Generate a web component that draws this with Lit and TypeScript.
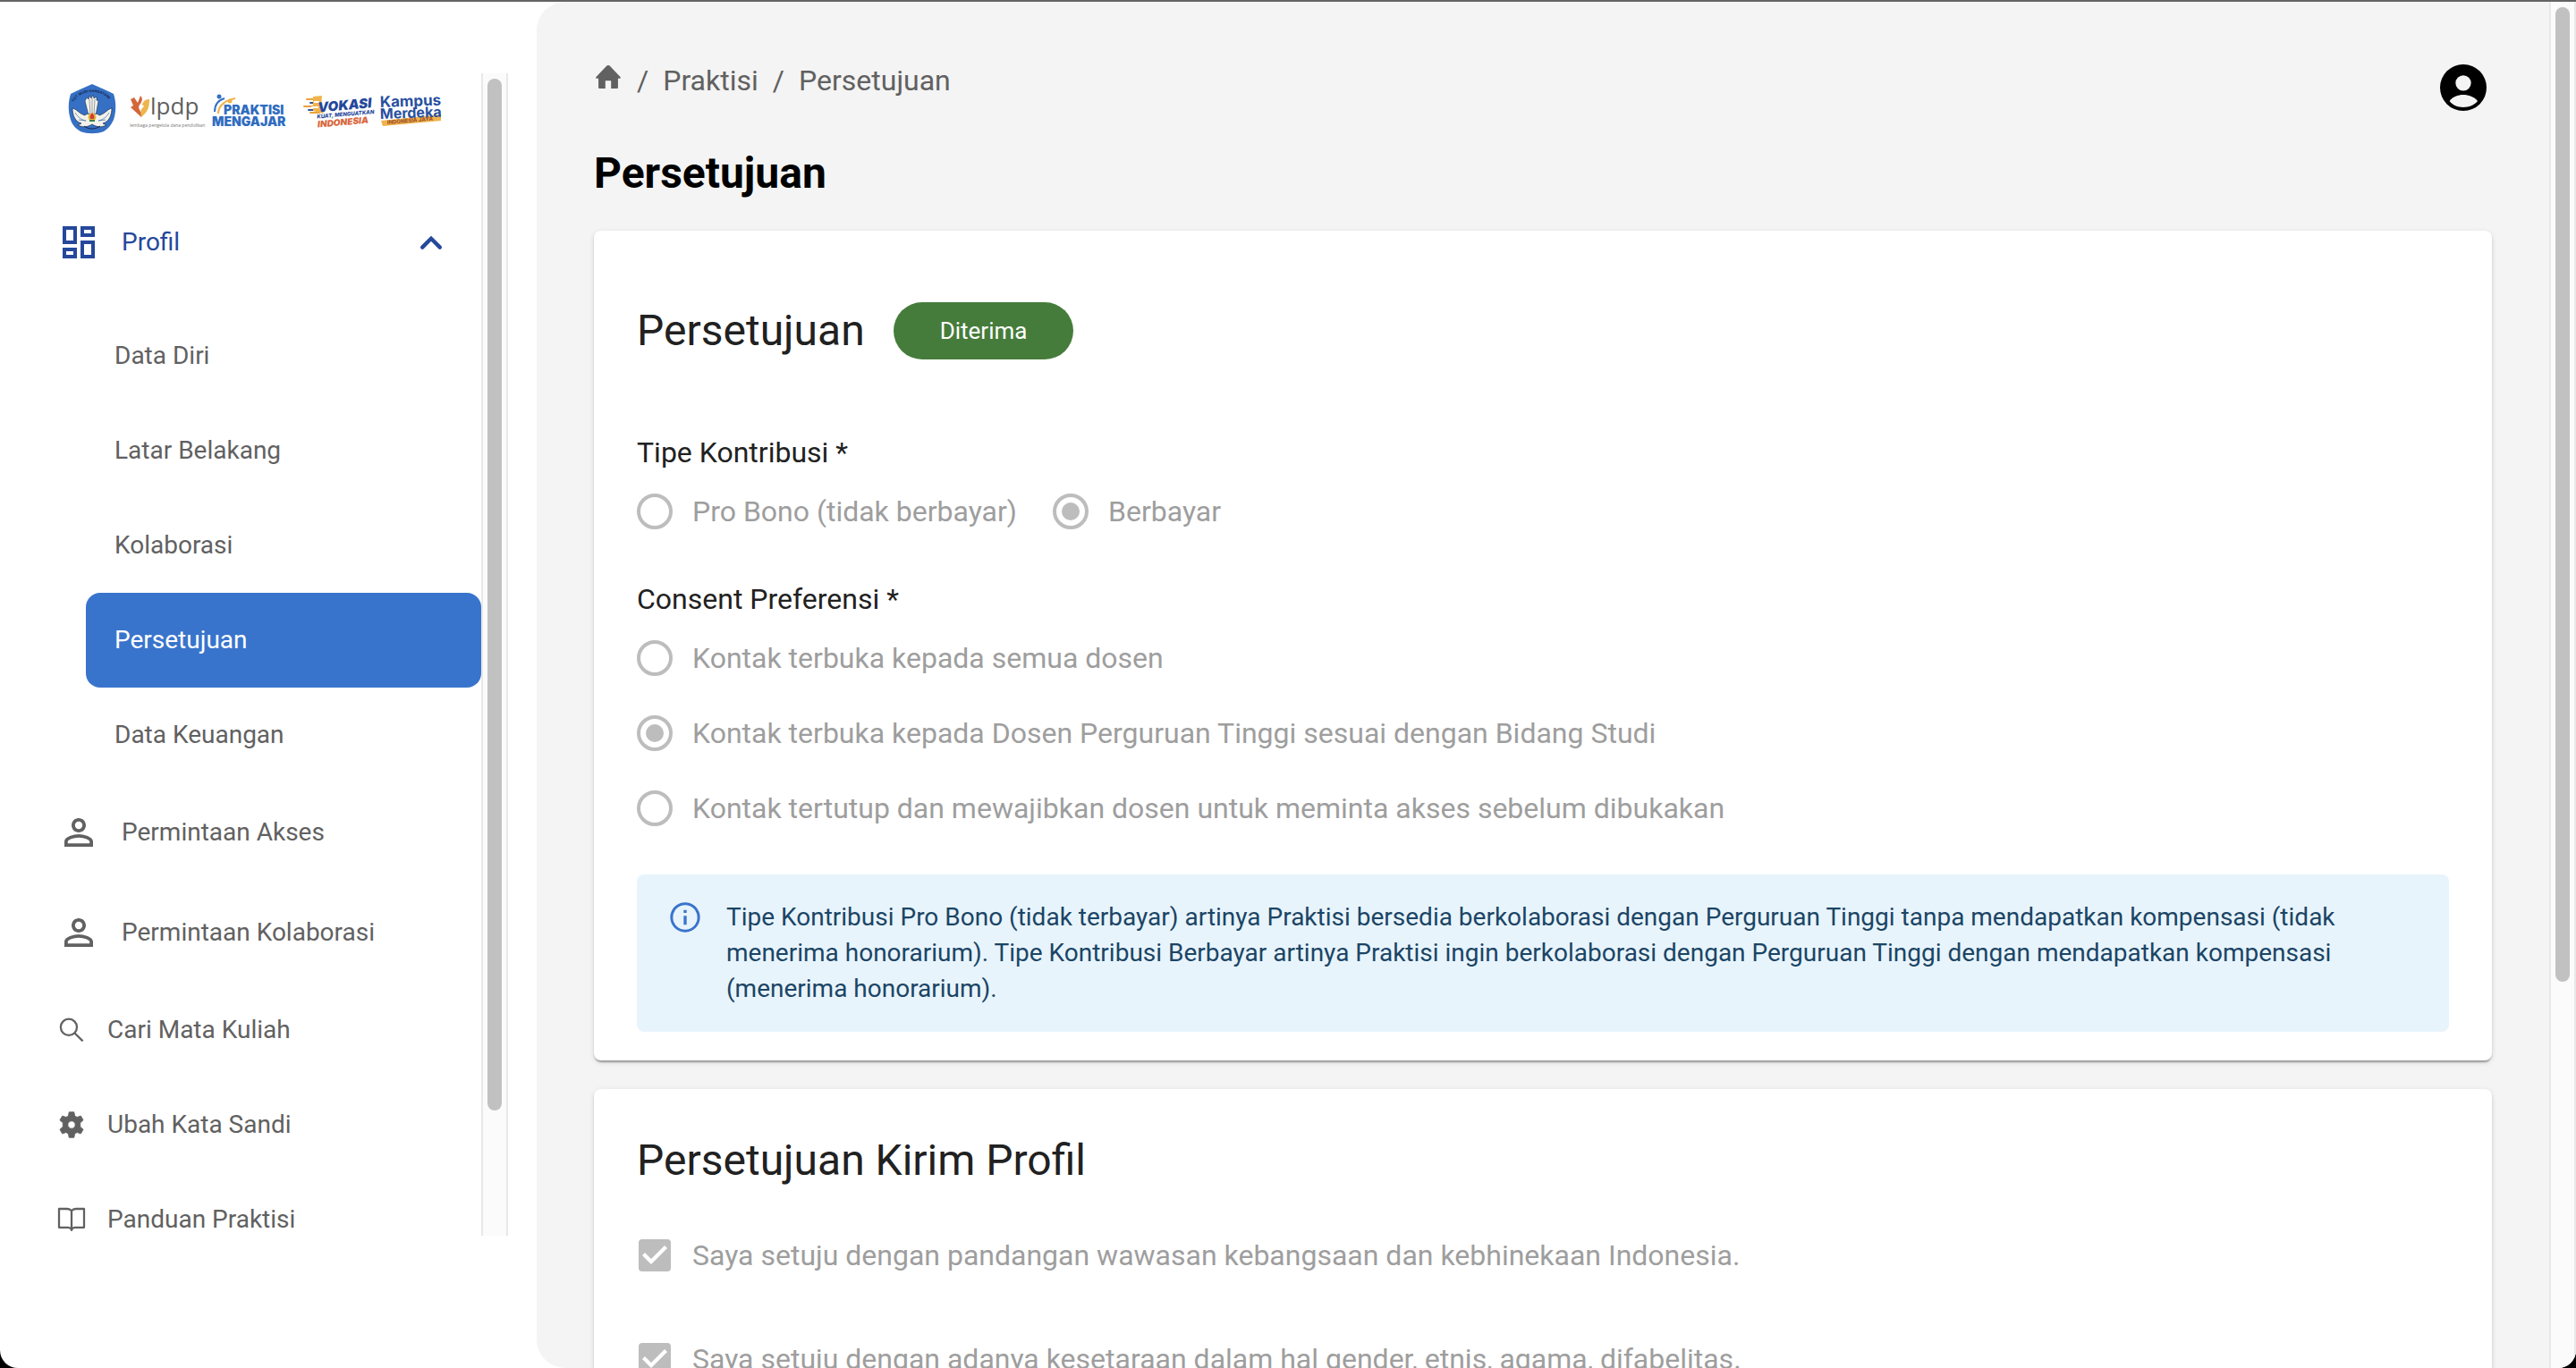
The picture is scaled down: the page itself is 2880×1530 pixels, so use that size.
import { LitElement, html, css, svg, nothing } from "lit";
import { customElement, property } from "lit/decorators.js";
import { classMap } from "lit/directives/class-map.js";

type IconName =
  | "dashboard"
  | "person"
  | "search"
  | "gear"
  | "book"
  | "chevron"
  | "home"
  | "info"
  | "account";

const icons: Record<IconName, ReturnType<typeof svg>> = {
  dashboard: svg`<path fill="currentColor" d="M19 5v2h-4V5h4M9 5v6H5V5h4m10 8v6h-4v-6h4M9 17v2H5v-2h4M21 3h-8v6h8V3zM11 3H3v10h8V3zm10 8h-8v10h8V11zm-10 4H3v6h8v-6z"/>`,
  person: svg`<path fill="currentColor" d="M12 5.9a2.1 2.1 0 1 1 0 4.2 2.1 2.1 0 0 1 0-4.2m0 9c2.97 0 6.1 1.46 6.1 2.1v1.1H5.9V17c0-.64 3.13-2.1 6.1-2.1M12 4C9.79 4 8 5.79 8 8s1.79 4 4 4 4-1.79 4-4-1.79-4-4-4zm0 9c-2.67 0-8 1.34-8 4v3h16v-3c0-2.66-5.33-4-8-4z"/>`,
  search: svg`<g fill="none" stroke="currentColor" stroke-width="1.7"><circle cx="9.7" cy="9.600" r="6.800"/><path d="M14.500 14.400l6.900 6.900"/></g>`,
  gear: svg`<path fill="currentColor" d="M9.900 1.300h4.200l.6 3.200 1.900 1.100 3.100-1.100 2.100 3.600-2.500 2.200v3.400l2.500 2.200-2.100 3.600-3.100-1.100-1.900 1.100-.6 3.200H9.900l-.6-3.200-1.900-1.100-3.100 1.100-2.100-3.600 2.500-2.200v-3.400L2.200 8.100l2.100-3.600 3.100 1.100 1.900-1.100zM12 8.900a3.100 3.100 0 1 0 0 6.200 3.100 3.100 0 0 0 0-6.200z" stroke="currentColor" stroke-width=".6" stroke-linejoin="round"/>`,
  book: svg`<g fill="none" stroke="currentColor" stroke-width="1.700" stroke-linejoin="round"><path d="M12 4.600C11 3.400 9.800 3 8.400 3H1.500v15.600h7.700c1.200 0 2.200.6 2.800 1.600.6-1 1.600-1.600 2.800-1.600h7.700V3h-6.900C14.200 3 13 3.400 12 4.600z"/><path d="M12 4.600v17"/></g>`,
  chevron: svg`<path fill="none" stroke="currentColor" stroke-width="2.200" stroke-linecap="round" d="M7.100 14.800 12 9.900l4.900 4.900"/>`,
  home: svg`<path fill="currentColor" d="M12 2.200c.5 0 .9.200 1.200.5l8.900 9.300c.5.6.3 1.400-.5 1.400h-1.400v7.400c0 .6-.4 1-1 1h-4.800v-6.600H9.600v6.600H4.800c-.6 0-1-.4-1-1v-7.400H2.400c-.8 0-1-.8-.5-1.400l8.900-9.300c.3-.3.7-.5 1.200-.5z"/>`,
  info: svg`<path fill="currentColor" d="M11 7h2v2h-2zm0 4h2v6h-2zm1-9C6.480 2 2 6.480 2 12s4.480 10 10 10 10-4.480 10-10S17.520 2 12 2zm0 18.200a8.200 8.200 0 1 1 0-16.400 8.200 8.200 0 0 1 0 16.400z"/>`,
  account: svg`<circle cx="12" cy="12" r="12" fill="#000"/><circle cx="12" cy="9.600" r="4" fill="#f4f4f4"/><path fill="#f4f4f4" d="M4.900 18.900C6.500 16.700 9.200 15.700 12 15.700s5.500 1 7.400 3.200C17.600 21.100 15 22.100 12 22.100s-5.500-1-7.100-3.200z"/>`,
};

@customElement("ui-icon")
class UiIcon extends LitElement {
  static styles = css`
    :host {
      display: block;
      flex: none;
    }
    .glyph {
      display: block;
      width: 100%;
      height: 100%;
    }
  `;

  @property() name: IconName = "home";

  render() {
    return html`<svg class="glyph" viewBox="0 0 24 24" aria-hidden="true">${icons[this.name]}</svg>`;
  }
}

@customElement("partner-logos")
class PartnerLogos extends LitElement {
  static styles = css`
    :host {
      display: flex;
      gap: 12px;
      font-family: Inter, sans-serif;
    }
    .logo {
      display: block;
      height: 58px;
      flex: none;
      overflow: visible;
    }
    .crest {
      width: 56px;
    }
    .wide {
      width: 82px;
    }
    .campus {
      width: 70px;
    }
  `;

  render() {
    return html`
      <svg class="logo crest" viewBox="0 0 56 58" role="img" aria-label="Tut Wuri Handayani">
        <path fill="#3570c4" d="M28 1c8 4 17 7 24 11 3 9 3 20 0 29-3 6-6 10-11 13-8 3-18 3-26 0C10 51 6 47 4 41 1 32 1 21 4 12 11 8 20 5 28 1z"/>
        <path id="arc" fill="none" d="M6 25C11 5 45 5 50 25"/>
        <text font-size="4" font-weight="700" fill="#16294f"><textPath href="#arc" startOffset="4">TUT WURI HANDAYANI</textPath></text>
        <path fill="#f3f2ea" stroke="#1d2c4c" stroke-width=".6" d="M22 16l2 2 1-4 2 3 2-4 1 4 3-2v4l2 1-3 16h-8l-4-16z"/>
        <path stroke="#5a6478" stroke-width=".6" fill="none" d="M25 18l1 18M28 17v19M31 18l-1 18"/>
        <path fill="#f3f2ea" stroke="#1d2c4c" stroke-width=".7" d="M6 28c5 1 7 6 14 8 2-2 4-2 8-1 4-1 6-1 8 1 7-2 9-7 14-8 0 8-3 15-10 17l4 2c-6 3-11 2-16-1-5 3-10 4-16 1l4-2C9 43 6 36 6 28z"/>
        <path stroke="#3d6cae" stroke-width=".7" fill="none" d="M9 33c3 5 7 8 12 9M47 33c-3 5-7 8-12 9M13 41l8 1M43 41l-8 1"/>
        <circle cx="28" cy="38" r="4.500" fill="#e5b63c"/>
        <path fill="#cf3f2e" d="M28 33c2 3 3 4 2 7h-4c-1-3 0-4 2-7z"/>
        <path fill="#3c8244" d="M25 41h6v2h-6z"/>
        <path stroke="#16294f" stroke-width="1" fill="none" d="M19 48c5 4 13 4 18 0"/>
      </svg>
      <svg class="logo wide" viewBox="0 0 82 58" role="img" aria-label="lpdp">
        <path fill="#d4673a" d="M3 18l4-2 4 6v6l4 5v5L3 27l3-2z"/>
        <path fill="#d4673a" d="M14 14c3 3 2 6 0 9-3 3-2 6 1 9-4-2-6-6-4-10z"/>
        <path fill="#eeb54c" d="M24 18c0 10-2 14-9 20-1-6-1-9 3-12l-2-2c1-4 4-6 8-6z"/>
        <text x="25" y="35" font-family="Open Sans, sans-serif" font-size="26" fill="#5f5f5f">lpdp</text>
        <text x="2" y="49" font-family="Open Sans, sans-serif" font-size="5" fill="#777">lembaga pengelola dana pendidikan</text>
      </svg>
      <svg class="logo wide" viewBox="0 0 82 58" role="img" aria-label="Praktisi Mengajar">
        <g fill="none" stroke-width="2"><path stroke="#f0b34a" d="M7 34c0-9 8-15 19-17"/><path stroke="#3570c4" d="M3 32C3 24 7 19 14 17"/></g>
        <circle cx="8" cy="15" r="2.500" fill="#3570c4"/>
        <circle cx="20" cy="20" r="2.500" fill="#f0b34a"/>
        <text x="13" y="35" font-size="14" font-weight="900" fill="#2f6cc0">PRAKTISI</text>
        <text x="0" y="48" font-size="14" font-weight="900" fill="#2f6cc0">MENGAJAR</text>
      </svg>
      <svg class="logo wide" viewBox="0 0 82 58" role="img" aria-label="Vokasi Kuat, Menguatkan Indonesia">
        <g stroke-width="2" stroke-linecap="round"><path stroke="#e9a13c" d="M12 18h14M9 26h16M16 33h10"/><path stroke="#35559b" d="M16 22h10M14 30h12"/></g>
        <path fill="#f0b34a" d="M19 15l10-1-1 12 3 8-12-3z"/>
        <path fill="#fff" d="M20 20h6v2h-6zM17 26h8v2h-8z"/>
        <g transform="rotate(-5 30 34)" font-style="italic">
          <text x="25" y="32" font-size="15" font-weight="900" fill="#24479a">VOKASI</text>
          <text x="23" y="39" font-size="6" font-weight="800" fill="#24479a">KUAT, MENGUATKAN</text>
          <text x="23" y="49" font-size="10" font-weight="900" fill="#d9663c">INDONESIA</text>
        </g>
      </svg>
      <svg class="logo campus" viewBox="0 0 70 58" role="img" aria-label="Kampus Merdeka Indonesia Jaya">
        <path fill="#f0b34a" d="M1 42l67-7v7L3 48z"/>
        <text x="8" y="46" font-size="6" font-weight="800" fill="#a0522d" transform="rotate(-5 8 46)">INDONESIA JAYA</text>
        <text x="0" y="27" font-size="17" font-weight="700" fill="#28509f" transform="rotate(-2 0 27)">Kampus</text>
        <text x="0" y="40" font-size="16" font-weight="700" fill="#28509f" transform="rotate(-2 0 40)">Merdeka</text>
      </svg>
    `;
  }
}

@customElement("scroll-track")
class ScrollTrack extends LitElement {
  static styles = css`
    :host {
      display: block;
      flex: none;
      box-sizing: border-box;
      width: 30px;
      padding: 6px 5px;
      background: #fafbfa;
      border: solid #e7e9e8;
      border-width: 0 2px;
    }
    .thumb {
      width: 16px;
      border-radius: 8px;
      background: #c1c1c1;
    }
  `;

  @property({ type: Number }) ratio = 1;

  render() {
    return html`<div class="thumb" style="height:${this.ratio * 100}%"></div>`;
  }
}

interface NavItem {
  label: string;
  icon?: IconName;
  kind: "group" | "child" | "main" | "plain";
  active?: boolean;
}

const navItems: NavItem[] = [
  { label: "Profil", icon: "dashboard", kind: "group" },
  { label: "Data Diri", kind: "child" },
  { label: "Latar Belakang", kind: "child" },
  { label: "Kolaborasi", kind: "child" },
  { label: "Persetujuan", kind: "child", active: true },
  { label: "Data Keuangan", kind: "child" },
  { label: "Permintaan Akses", icon: "person", kind: "main" },
  { label: "Permintaan Kolaborasi", icon: "person", kind: "main" },
  { label: "Cari Mata Kuliah", icon: "search", kind: "plain" },
  { label: "Ubah Kata Sandi", icon: "gear", kind: "plain" },
  { label: "Panduan Praktisi", icon: "book", kind: "plain" },
];

@customElement("side-bar")
class SideBar extends LitElement {
  static styles = css`
    :host {
      display: flex;
      flex: none;
      box-sizing: border-box;
      width: 600px;
      padding: 80px 32px 148px 0;
      color: #616161;
      font-size: 28px;
      line-height: 40px;
    }
    .scroller {
      flex: 1;
      min-width: 0;
      overflow: auto;
      scrollbar-width: none;
    }
    .logos {
      padding: 11px 0 64px 75px;
    }
    .nav {
      display: flex;
      flex-direction: column;
    }
    .item {
      display: flex;
      align-items: center;
      flex: none;
      box-sizing: border-box;
      border: 0;
      background: none;
      color: inherit;
      font: inherit;
      text-align: left;
      text-decoration: none;
      height: 106px;
      padding: 0 32px 0 64px;
      gap: 24px;
    }
    .group,
    .main {
      height: 112px;
    }
    .group {
      color: #25489b;
      margin-bottom: 18px;
    }
    .child {
      margin-left: 96px;
      padding: 0 32px;
      border-radius: 16px;
    }
    .active {
      background: #3974cc;
      color: #fff;
    }
    .label {
      flex: 1;
    }
    .large {
      width: 48px;
      height: 48px;
    }
    .small {
      width: 32px;
      height: 32px;
    }
  `;

  private renderItem(item: NavItem) {
    const classes = classMap({ item: true, [item.kind]: true, active: !!item.active });
    const size = item.kind === "plain" ? "small" : "large";
    const body = html`
      ${item.icon ? html`<ui-icon class=${size} name=${item.icon}></ui-icon>` : nothing}
      <span class="label">${item.label}</span>
    `;
    return item.kind === "group"
      ? html`<button class=${classes} type="button" aria-expanded="true">
          ${body}<ui-icon class="large" name="chevron"></ui-icon>
        </button>`
      : html`<a class=${classes} href="#" aria-current=${item.active ? "page" : nothing}>${body}</a>`;
  }

  render() {
    return html`
      <div class="scroller">
        <partner-logos class="logos"></partner-logos>
        <nav class="nav">${navItems.map((item) => this.renderItem(item))}</nav>
      </div>
      <scroll-track .ratio=${0.896}></scroll-track>
    `;
  }
}

interface Choice {
  label: string;
  checked?: boolean;
}

const contributionTypes: Choice[] = [
  { label: "Pro Bono (tidak berbayar)" },
  { label: "Berbayar", checked: true },
];

const consentPreferences: Choice[] = [
  { label: "Kontak terbuka kepada semua dosen" },
  { label: "Kontak terbuka kepada Dosen Perguruan Tinggi sesuai dengan Bidang Studi", checked: true },
  { label: "Kontak tertutup dan mewajibkan dosen untuk meminta akses sebelum dibukakan" },
];

const statements: Choice[] = [
  { label: "Saya setuju dengan pandangan wawasan kebangsaan dan kebhinekaan Indonesia.", checked: true },
  { label: "Saya setuju dengan adanya kesetaraan dalam hal gender, etnis, agama, difabelitas.", checked: true },
];

@customElement("consent-form")
class ConsentForm extends LitElement {
  static styles = css`
    :host {
      display: flex;
      flex-direction: column;
      gap: 32px;
      color: #212121;
      font-size: 32px;
      line-height: 48px;
    }
    .card {
      padding: 48px 48px 32px;
      border-radius: 8px;
      background: #fff;
      box-shadow: 0 4px 2px -2px rgba(0, 0, 0, 0.2), 0 2px 2px rgba(0, 0, 0, 0.14),
        0 2px 6px rgba(0, 0, 0, 0.12);
    }
    .first {
      padding-top: 80px;
    }
    .heading {
      display: flex;
      align-items: center;
      gap: 32px;
    }
    .first .heading {
      margin-bottom: 80px;
    }
    .title {
      margin: 0;
      font-size: 48px;
      font-weight: 400;
      line-height: 64px;
    }
    .badge {
      padding: 0 52px;
      border-radius: 32px;
      background: #467c3b;
      color: #fff;
      font-size: 26px;
      line-height: 64px;
    }
    .field {
      margin: 0 0 32px;
      padding: 0;
      border: 0;
    }
    .legend {
      padding: 0;
    }
    .options {
      display: flex;
      flex-direction: column;
    }
    .inline {
      flex-direction: row;
      gap: 40px;
    }
    .checks {
      gap: 32px;
      padding-top: 32px;
    }
    .choice {
      display: flex;
      align-items: center;
      height: 84px;
      gap: 22px;
      color: #9e9e9e;
    }
    .radio,
    .check {
      display: grid;
      place-items: center;
      flex: none;
      box-sizing: border-box;
      appearance: none;
      margin: 0;
    }
    .radio {
      width: 40px;
      height: 40px;
      border: 4px solid #bdbdbd;
      border-radius: 50%;
    }
    .radio:checked::after {
      content: "";
      width: 20px;
      height: 20px;
      border-radius: 50%;
      background: #bdbdbd;
    }
    .check {
      width: 36px;
      height: 36px;
      margin: 0 2px;
      border-radius: 4px;
      background: #bdbdbd;
    }
    .check:checked::after {
      content: "";
      width: 36px;
      height: 36px;
      background: #fff;
      clip-path: polygon(14px 28px, 4px 18px, 7px 15px, 14px 22px, 29px 7px, 32px 10px);
    }
    .alert {
      display: flex;
      gap: 24px;
      padding: 28px 32px;
      border-radius: 8px;
      background: #e8f4fc;
      color: #1b4565;
      font-size: 28px;
      line-height: 40px;
    }
    .alert-icon {
      width: 44px;
      height: 40px;
      color: #3974cc;
    }
    .alert-text {
      margin: 0;
    }
  `;

  private renderRadio(name: string, choice: Choice) {
    return html`<label class="choice">
      <input class="radio" type="radio" name=${name} ?checked=${choice.checked} disabled />
      <span>${choice.label}</span>
    </label>`;
  }

  render() {
    return html`
      <section class="card first">
        <div class="heading">
          <h2 class="title">Persetujuan</h2>
          <span class="badge">Diterima</span>
        </div>
        <fieldset class="field">
          <legend class="legend">Tipe Kontribusi *</legend>
          <div class="options inline">
            ${contributionTypes.map((choice) => this.renderRadio("contribution", choice))}
          </div>
        </fieldset>
        <fieldset class="field">
          <legend class="legend">Consent Preferensi *</legend>
          <div class="options">
            ${consentPreferences.map((choice) => this.renderRadio("consent", choice))}
          </div>
        </fieldset>
        <div class="alert" role="note">
          <ui-icon class="alert-icon" name="info"></ui-icon>
          <p class="alert-text">
            Tipe Kontribusi Pro Bono (tidak terbayar) artinya Praktisi bersedia berkolaborasi dengan
            Perguruan Tinggi tanpa mendapatkan kompensasi (tidak menerima honorarium). Tipe Kontribusi
            Berbayar artinya Praktisi ingin berkolaborasi dengan Perguruan Tinggi dengan mendapatkan
            kompensasi (menerima honorarium).
          </p>
        </div>
      </section>
      <section class="card">
        <h2 class="title">Persetujuan Kirim Profil</h2>
        <div class="options checks">
          ${statements.map(
            (choice) => html`<label class="choice">
              <input class="check" type="checkbox" ?checked=${choice.checked} disabled />
              <span>${choice.label}</span>
            </label>`,
          )}
        </div>
      </section>
    `;
  }
}

@customElement("app-root")
class AppRoot extends LitElement {
  static styles = css`
    :host {
      display: block;
      height: 100vh;
      overflow: hidden;
      background: #000;
      font-family: Roboto, sans-serif;
    }
    .window {
      display: flex;
      box-sizing: border-box;
      height: 100%;
      overflow: hidden;
      border-top: 2px solid #656363;
      border-radius: 0 0 20px 20px;
      background: #fff;
    }
    .main {
      flex: 1;
      min-width: 0;
      box-sizing: border-box;
      padding: 64px;
      overflow: auto;
      scrollbar-width: none;
      border-radius: 32px 0 0 32px;
      background: #f4f4f4;
    }
    .top {
      display: flex;
      align-items: flex-start;
      justify-content: space-between;
    }
    .crumbs {
      display: flex;
      gap: 16px;
      color: #616161;
      font-size: 32px;
      line-height: 48px;
    }
    .crumb {
      color: inherit;
      text-decoration: none;
    }
    .home {
      width: 32px;
      height: 40px;
    }
    .user {
      display: flex;
      align-items: center;
      justify-content: center;
      width: 64px;
      height: 64px;
      padding: 0;
      border: 0;
      background: none;
    }
    .avatar {
      width: 52px;
      height: 52px;
    }
    .page-title {
      margin: 32px 0;
      color: #000;
      font-size: 48px;
      font-weight: 700;
      line-height: 64px;
    }
  `;

  render() {
    return html`
      <div class="window">
        <side-bar></side-bar>
        <main class="main">
          <header class="top">
            <nav class="crumbs" aria-label="Breadcrumb">
              <a class="crumb" href="#" aria-label="Beranda"><ui-icon class="home" name="home"></ui-icon></a>
              <span>/</span>
              <a class="crumb" href="#">Praktisi</a>
              <span>/</span>
              <a class="crumb" href="#" aria-current="page">Persetujuan</a>
            </nav>
            <button class="user" type="button" aria-label="Akun">
              <ui-icon class="avatar" name="account"></ui-icon>
            </button>
          </header>
          <h1 class="page-title">Persetujuan</h1>
          <consent-form></consent-form>
        </main>
        <scroll-track .ratio=${0.719}></scroll-track>
      </div>
    `;
  }
}
